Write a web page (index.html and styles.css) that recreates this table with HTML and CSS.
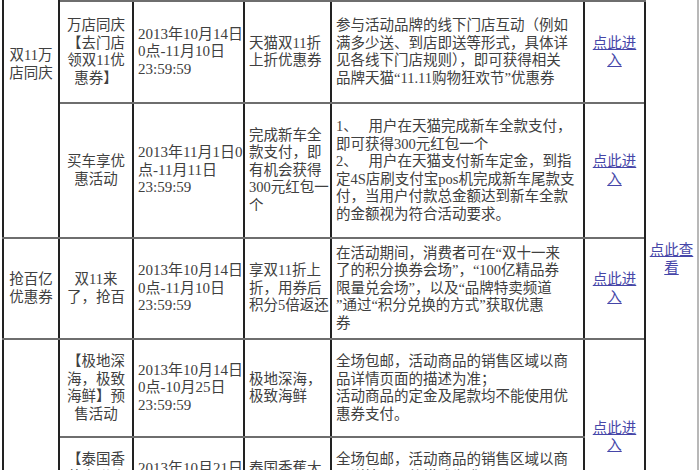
FILE: index.html
```html
<!DOCTYPE html>
<html lang="zh-CN">
<head>
<meta charset="utf-8">
<title>双11活动</title>
<link rel="stylesheet" href="styles.css">
</head>
<body>
<div class="page">
<table class="promo">
  <colgroup>
    <col class="c1"><col class="c2"><col class="c3"><col class="c4"><col class="c5"><col class="c6"><col class="c7">
  </colgroup>
  <tbody>
    <tr class="r0">
      <td class="ctr" rowspan="3">双11万<br>店同庆</td>
      <td></td>
      <td></td>
      <td></td>
      <td></td>
      <td></td>
      <td class="ctr side" rowspan="7"><a href="#">点此查</a><br><a href="#">看</a></td>
    </tr>
    <tr class="r1">
      <td class="ctr">万店同庆<br>【去门店<br>领双11优<br>惠券】</td>
      <td class="date">2013年10月14日<br>0点-11月10日<br>23:59:59</td>
      <td>天猫双11折<br>上折优惠券</td>
      <td>参与活动品牌的线下门店互动（例如<br>满多少送、到店即送等形式，具体详<br>见各线下门店规则），即可获得相关<br>品牌天猫“11.11购物狂欢节”优惠券</td>
      <td class="ctr"><a href="#">点此进</a><br><a href="#">入</a></td>
    </tr>
    <tr class="r2">
      <td class="ctr">买车享优<br>惠活动</td>
      <td class="date">2013年11月1日0<br>点-11月11日<br>23:59:59</td>
      <td>完成新车全<br>款支付，即<br>有机会获得<br>300元红包一<br>个</td>
      <td>1、&nbsp;&nbsp;&nbsp;用户在天猫完成新车全款支付，<br>即可获得300元红包一个<br>2、&nbsp;&nbsp;&nbsp;用户在天猫支付新车定金，到指<br>定4S店刷支付宝pos机完成新车尾款支<br>付，当用户付款总金额达到新车全款<br>的金额视为符合活动要求。</td>
      <td class="ctr"><a href="#">点此进</a><br><a href="#">入</a></td>
    </tr>
    <tr class="r3">
      <td class="ctr">抢百亿<br>优惠券</td>
      <td class="ctr">双11来<br>了，抢百</td>
      <td class="date">2013年10月14日<br>0点-11月10日<br>23:59:59</td>
      <td>享双11折上<br>折，用券后<br>积分5倍返还</td>
      <td>在活动期间，消费者可在“双十一来<br>了的积分换券会场”，“100亿精品券<br>限量兑会场”，以及“品牌特卖频道<br>”通过“积分兑换的方式”获取优惠<br>券</td>
      <td class="ctr"><a href="#">点此进</a><br><a href="#">入</a></td>
    </tr>
    <tr class="r4">
      <td rowspan="3"></td>
      <td class="ctr">【极地深<br>海，极致<br>海鲜】预<br>售活动</td>
      <td class="date">2013年10月14日<br>0点-10月25日<br>23:59:59</td>
      <td>极地深海，<br>极致海鲜</td>
      <td>全场包邮，活动商品的销售区域以商<br>品详情页面的描述为准；<br>活动商品的定金及尾款均不能使用优<br>惠券支付。</td>
      <td class="ctr" rowspan="2"><a href="#">点此进</a><br><a href="#">入</a></td>
    </tr>
    <tr class="r5">
      <td class="ctr">【泰国香<br>蕉大联欢<br>】预售活<br>动</td>
      <td class="date">2013年10月21日<br>0点-11月1日<br>23:59:59</td>
      <td>泰国香蕉大<br>联欢，香甜<br>好滋味</td>
      <td>全场包邮，活动商品的销售区域以商<br>品详情页面的描述为准；<br>活动商品的定金及尾款均不能使用优<br>惠券支付。</td>
    </tr>
    <tr class="r6">
      <td></td>
      <td></td>
      <td></td>
      <td></td>
      <td></td>
    </tr>
  </tbody>
</table>
</div>
</body>
</html>
```

FILE: styles.css
```css
html, body {
  margin: 0;
  padding: 0;
  background: #ffffff;
}

.page {
  width: 700px;
  height: 470px;
  overflow: hidden;
}

.promo {
  border-collapse: collapse;
  table-layout: fixed;
  width: 695px;
  margin: -110px 0 0 2px;
  font-family: "Liberation Serif", "Noto Sans CJK SC", serif;
  font-size: 14.5px;
  line-height: 17.5px;
  color: #404040;
}

.c1 { width: 56px; }
.c2 { width: 74px; }
.c3 { width: 111px; }
.c4 { width: 87px; }
.c5 { width: 253px; }
.c6 { width: 61px; }
.c7 { width: 53px; }

.promo td {
  padding: 2px 3px 2px 4px;
  border-left: 2px solid #222222;
  border-right: 2px solid #222222;
  border-top: 2px solid #6e6e6e;
  border-bottom: 2px solid #6e6e6e;
  vertical-align: middle;
  text-align: left;
  white-space: nowrap;
  overflow: hidden;
}

.promo td.ctr {
  text-align: center;
  padding-left: 2px;
  padding-right: 2px;
}

.promo td.date {
  font-size: 15px;
}

.promo td.side {
  border-right-color: #b8b8b8;
}

.promo a {
  color: #4646a8;
  text-decoration: underline;
}

.r0 { height: 110px; }
.r1 { height: 102px; }
.r2 { height: 135px; }
.r3 { height: 101px; }
.r4 { height: 98px; }
.r5 { height: 98px; }
.r6 { height: 93px; }
```
